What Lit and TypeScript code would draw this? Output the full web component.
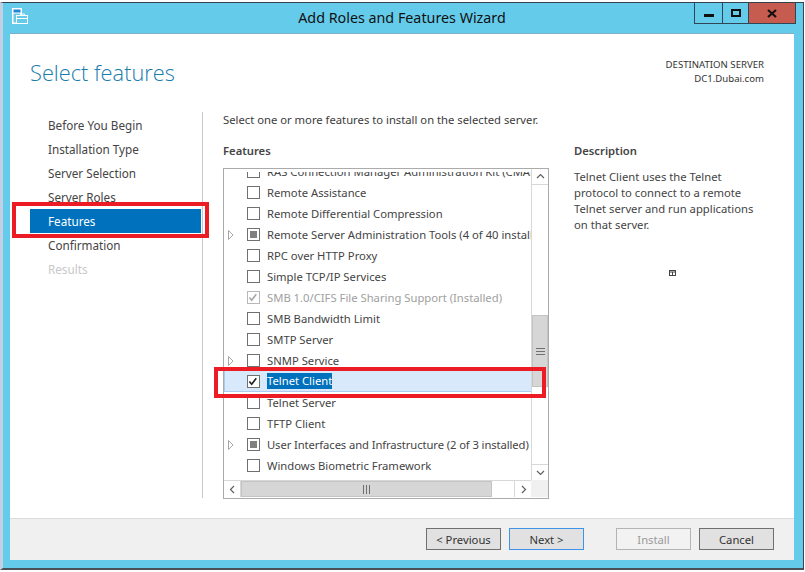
import { LitElement, html, css, svg } from "lit";
import { customElement } from "lit/decorators.js";

type Row = { t: string; c?: "" | "mixed" | "checked" | "disabled"; exp?: boolean; sel?: boolean; dim?: boolean; tight?: boolean };

const rows: Row[] = [
  { t: "RAS Connection Manager Administration Kit (CMAK)" },
  { t: "Remote Assistance" },
  { t: "Remote Differential Compression" },
  { t: "Remote Server Administration Tools (4 of 40 installed)", c: "mixed", exp: true },
  { t: "RPC over HTTP Proxy" },
  { t: "Simple TCP/IP Services" },
  { t: "SMB 1.0/CIFS File Sharing Support (Installed)", c: "disabled", dim: true },
  { t: "SMB Bandwidth Limit" },
  { t: "SMTP Server" },
  { t: "SNMP Service", exp: true },
  { t: "Telnet Client", c: "checked", sel: true },
  { t: "Telnet Server" },
  { t: "TFTP Client" },
  { t: "User Interfaces and Infrastructure (2 of 3 installed)", c: "mixed", exp: true, tight: true },
  { t: "Windows Biometric Framework" },
];

const nav = ["Before You Begin", "Installation Type", "Server Selection", "Server Roles", "Features", "Confirmation", "Results"];

const chev = (d: string) => html`<svg width="9" height="9" viewBox="0 0 9 9"><path d=${d} fill="none" stroke="#606060" stroke-width="1.2"/></svg>`;
const check = (color: string) => svg`<path d="M2.5 6.5 L5 9.5 L10 3" fill="none" stroke=${color} stroke-width="1.8"/>`;

@customElement("app-root")
export class AppRoot extends LitElement {
  static styles = css`
    :host { display: block; width: 805px; height: 572px; overflow: hidden; position: relative; background: #fdfdfd;
      font-family: "Noto Sans", "Open Sans", sans-serif; font-size: 11.25px; color: #3c3c3c; box-sizing: border-box; padding-top: 2px; }
    * { box-sizing: border-box; }
    .window { width: 804px; height: 568px; border-top: 1px solid #33414d; border-right: 1px solid #3c4650; border-bottom: 2px solid #4a5057;
      border-left: 3px solid #c3cfe2; background: #65cbeb; padding: 0 9px 8px 7px; display: flex; flex-direction: column; }
    .title { height: 30px; flex: none; display: flex; align-items: flex-start; }
    .iconwrap { width: 18px; flex: none; padding-left: 2px; }
    .appicon { margin: 5px 0 0 0; display: block; }
    .caption { flex: 1; text-align: center; font-size: 14.3px; line-height: 30px; color: #111; padding-left: 82px; }
    .controls { display: flex; height: 21px; border: 1px solid #2f4656; border-top: 0; flex: none; margin-right: -2px; }
    .controls div { display: flex; align-items: center; justify-content: center; }
    .min { width: 28px; border-right: 1px solid #2f4656; }
    .max { width: 26px; border-right: 1px solid #2f4656; }
    .close { width: 46px; background: #c65b50; }
    .panel { flex: 1; display: flex; flex-direction: column; background: #fff; border-top: 1px solid #7fb0c8; min-height: 0; }
    .head { height: 78px; flex: none; display: flex; justify-content: space-between; padding: 0 30px 0 20px; }
    h1 { margin: 20px 0 0 0; font-family: "Open Sans", sans-serif; font-weight: 300; font-size: 21.8px; line-height: 38px; color: #1a7cab; }
    .dest { margin-top: 24px; text-align: right; font-size: 9.6px; line-height: 14px; color: #333; }
    .body { flex: 1; display: flex; min-height: 0; padding-bottom: 20px; }
    .nav { width: 193px; flex: none; padding: 1px 0 0 20px; border-right: 1px solid #c8c8c8; font-size: 11.7px; }
    .nav div { height: 24px; line-height: 24px; padding-left: 18px; width: 171px; color: #444; }
    .nav .on { background: #0071bc; color: #fff; }
    .nav .off { color: #c8c8c8; }
    .main { width: 351px; flex: none; padding: 0 0 0 20px; }
    .intro { height: 31px; line-height: 15px; }
    .sub { height: 25px; line-height: 16px; font-weight: 600; color: #444; }
    .box { width: 326px; height: 331px; border: 1px solid #ababab; display: grid; grid-template-columns: 307px 17px; grid-template-rows: 311px 17px; background: #fff; }
    .list { overflow: hidden; margin-top: 3px; }
    .rows { margin-top: -11px; }
    .row { height: 21px; display: flex; align-items: center; white-space: nowrap; overflow: hidden; color: #444; }
    .row.sel { background: #d9e9fc; border-bottom: 1px solid #a9cdf0; border-left: 1px solid #a9cdf0; }
    .row.dim { color: #a0a0a0; }
    .row.tight .txt { letter-spacing: -0.1px; }
    .exp { width: 23px; padding-left: 4px; flex: none; display: flex; align-items: center; }
    .sel .exp { width: 22px; }
    .cb { width: 13px; height: 13px; flex: none; border: 1px solid #707070; margin-right: 7px; background: #fff; display: flex; align-items: center; justify-content: center; }
    .cb.disabled { border-color: #b8b8b8; }
    .cb i { display: block; width: 7px; height: 7px; background: #808080; }
    .txt { line-height: 16px; }
    .sel .txt { background: #0071bc; color: #fff; }
    .vbar { display: flex; flex-direction: column; border-left: 1px solid #d8d8d8; grid-row: 1; grid-column: 2; background: #fff; }
    .arrow { height: 16px; flex: none; display: flex; align-items: center; justify-content: center; background: #fff; }
    .vbar .arrow:first-child { border-bottom: 1px solid #d8d8d8; }
    .vbar .arrow:last-child { border-top: 1px solid #d8d8d8; }
    .vtrack { flex: 1; padding-top: 130px; padding-bottom: 77px; }
    .vthumb { height: 100%; background: #d6d6d6; border: 1px solid #c4c4c4; display: flex; align-items: center; justify-content: center; }
    .hbar { display: flex; grid-column: 1; grid-row: 2; border-top: 1px solid #d8d8d8; background: #fff; }
    .hbar .arrow { width: 17px; height: 16px; }
    .hbar .arrow:first-child { border-right: 1px solid #d8d8d8; }
    .hbar .arrow:last-child { border-left: 1px solid #d8d8d8; }
    .htrack { flex: 1; padding-right: 22px; }
    .hthumb { height: 100%; background: #d6d6d6; border: 1px solid #c4c4c4; display: flex; align-items: center; justify-content: center; }
    .corner { background: #f0f0f0; grid-column: 2; grid-row: 2; }
    .side { flex: 1; padding-left: 20px; }
    .side .lbl2 { height: 31px; }
    .desc { width: 190px; line-height: 16px; color: #444; margin: 0; padding-top: 1px; }
    .tiny { margin: 37px 0 0 95px; display: block; }
    .foot { height: 42px; flex: none; background: #f0f0f0; border-top: 1px solid #dcdcdc; display: flex; padding: 9px 20px 0 0; justify-content: flex-end; }
    button { width: 75px; height: 22px; padding: 0; font: inherit; color: #333; background: #e1e1e1; border: 1px solid #707070; margin-left: 8px; }
    button.def { border-color: #3d94ea; margin-right: 24px; }
    button.dis { background: #f2f2f2; border-color: #b4b4b4; color: #9a9a9a; }
    .mark { position: absolute; border: 4px solid #ec1c24; pointer-events: none; }
    .m1 { left: 12px; top: 202px; width: 197px; height: 36px; }
    .m2 { left: 214px; top: 367px; width: 332px; height: 31px; }
  `;

  private icon() {
    return html`<svg class="appicon" width="16" height="17" viewBox="0 0 16 17">
      <rect x="0.5" y="0.5" width="9" height="15" fill="#fff" stroke="#fff"/>
      <rect x="1.5" y="1.5" width="7" height="3" fill="#1f86d8"/>
      <rect x="1.5" y="5.5" width="7" height="9" fill="#6cc8ea"/>
      <rect x="4.5" y="7.5" width="11" height="8" fill="#65cbeb" stroke="#fff"/>
      <path d="M5 10.5h10M8.5 7.5v-1.5h4v1.5" fill="none" stroke="#fff"/>
    </svg>`;
  }

  private renderRow(r: Row) {
    const c = r.c ?? "";
    return html`<div class="row ${r.sel ? "sel" : ""} ${r.dim ? "dim" : ""} ${r.tight ? "tight" : ""}">
      <span class="exp">${r.exp ? html`<svg width="6" height="10" viewBox="0 0 6 10"><path d="M0.5 0.5 L5 5 L0.5 9.5 Z" fill="#fff" stroke="#a6a6a6"/></svg>` : ""}</span>
      <span class="cb ${c}">
        ${c === "mixed" ? html`<i></i>` : ""}
        ${c === "checked" ? html`<svg width="11" height="11" viewBox="1 1 12 11">${check("#222")}</svg>` : ""}
        ${c === "disabled" ? html`<svg width="11" height="11" viewBox="1 1 12 11">${check("#a8a8a8")}</svg>` : ""}
      </span>
      <span class="txt">${r.t}</span>
    </div>`;
  }

  render() {
    return html`
      <div class="window">
        <div class="title">
          <div class="iconwrap">${this.icon()}</div>
          <div class="caption">Add Roles and Features Wizard</div>
          <div class="controls">
            <div class="min"><svg width="10" height="10" viewBox="0 0 10 10"><rect x="0" y="6" width="10" height="3" fill="#111"/></svg></div>
            <div class="max"><svg width="10" height="9" viewBox="0 0 10 9"><rect x="1" y="1" width="8" height="6" fill="none" stroke="#111" stroke-width="2"/></svg></div>
            <div class="close"><svg width="10" height="9" viewBox="0 0 10 9"><path d="M1 1 L9 8 M9 1 L1 8" stroke="#111" stroke-width="2.2"/></svg></div>
          </div>
        </div>
        <div class="panel">
          <div class="head">
            <h1>Select features</h1>
            <div class="dest">DESTINATION SERVER<br />DC1.Dubai.com</div>
          </div>
          <div class="body">
            <div class="nav">
              ${nav.map((n) => html`<div class=${n === "Features" ? "on" : n === "Results" ? "off" : ""}>${n}</div>`)}
            </div>
            <div class="main">
              <div class="intro">Select one or more features to install on the selected server.</div>
              <div class="sub">Features</div>
              <div class="box">
                <div class="list"><div class="rows">${rows.map((r) => this.renderRow(r))}</div></div>
                <div class="vbar">
                  <div class="arrow">${chev("M1 6 L4.5 2.5 L8 6")}</div>
                  <div class="vtrack"><div class="vthumb"><svg width="9" height="9" viewBox="0 0 9 9"><path d="M0 1.5h9M0 4.5h9M0 7.5h9" stroke="#707070"/></svg></div></div>
                  <div class="arrow">${chev("M1 3 L4.5 6.5 L8 3")}</div>
                </div>
                <div class="hbar">
                  <div class="arrow">${chev("M6 1 L2.5 4.5 L6 8")}</div>
                  <div class="htrack"><div class="hthumb"><svg width="9" height="9" viewBox="0 0 9 9"><path d="M1.5 0v9M4.5 0v9M7.5 0v9" stroke="#707070"/></svg></div></div>
                  <div class="arrow">${chev("M3 1 L6.5 4.5 L3 8")}</div>
                </div>
                <div class="corner"></div>
              </div>
            </div>
            <div class="side">
              <div class="lbl2"></div>
              <div class="sub">Description</div>
              <p class="desc">Telnet Client uses the Telnet protocol to connect to a remote Telnet server and run applications on that server.</p>
              <svg class="tiny" width="7" height="6" viewBox="0 0 7 6"><rect x="0.5" y="0.5" width="6" height="5" fill="#fff" stroke="#444"/><path d="M0 2h7M3.5 2v4" stroke="#444"/></svg>
            </div>
          </div>
          <div class="foot">
            <button>&lt; Previous</button>
            <button class="def">Next &gt;</button>
            <button class="dis">Install</button>
            <button>Cancel</button>
          </div>
        </div>
      </div>
      <div class="mark m1"></div>
      <div class="mark m2"></div>
    `;
  }
}
